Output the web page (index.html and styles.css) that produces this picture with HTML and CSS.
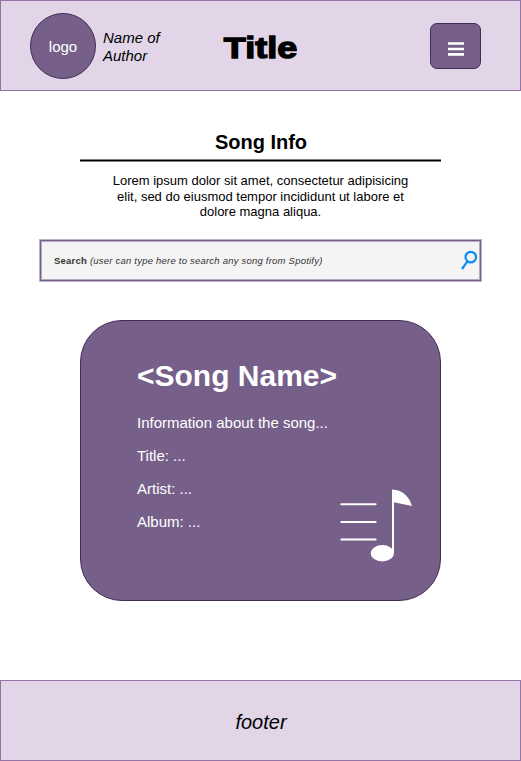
FILE: index.html
```html
<!DOCTYPE html>
<html lang="en">
<head>
<meta charset="utf-8">
<title>Song Info</title>
<link rel="stylesheet" href="styles.css">
</head>
<body>
<header class="header">
  <div class="brand">
    <div class="logo">logo</div>
    <div class="author">Name of<br>Author</div>
  </div>
  <h1 class="title">Title</h1>
  <button class="menu" aria-label="Menu"><svg width="16" height="14" viewBox="0 0 16 14"><path d="M0 1.5H16M0 7H16M0 12.4H16"/></svg></button>
</header>
<main>
  <section class="intro">
    <h2>Song Info</h2>
    <p>Lorem ipsum dolor sit amet, consectetur adipisicing<br>elit, sed do eiusmod tempor incididunt ut labore et<br>dolore magna aliqua.</p>
  </section>
  <div class="search">
    <div class="search-text"><b>Search</b> <i>(user can type here to search any song from Spotify)</i></div>
    <svg class="search-icon" width="18" height="20" viewBox="0 0 18 20"><circle cx="10.8" cy="7.1" r="5.3"/><path d="M7.4 11.4L2 19"/></svg>
  </div>
  <article class="card">
    <div class="details">
      <h3>&lt;Song Name&gt;</h3>
      <p>Information about the song...</p>
      <p>Title: ...</p>
      <p>Artist: ...</p>
      <p>Album: ...</p>
    </div>
    <svg class="note" width="74" height="74" viewBox="0 0 74 74">
      <path class="lines" d="M1.3 16.2H35.6M1.3 34H35.6M1.3 51.5H35.6"/>
      <ellipse cx="42.3" cy="65.2" rx="11.5" ry="8.2"/>
      <path d="M52 1.4C62 1.6 69.5 8.5 72 18L54 14.3V65H52Z"/>
    </svg>
  </article>
</main>
<footer class="footer">footer</footer>
</body>
</html>
```
FILE: styles.css
```css
* { box-sizing: border-box; }
body {
  margin: 0;
  height: 761px;
  display: flex;
  flex-direction: column;
  background: #fff;
  color: #000;
  font-family: "Liberation Sans", Arial, sans-serif;
}
h1, h2, h3, p { margin: 0; }
.header {
  height: 91px;
  padding: 0 39px 0 29px;
  display: grid;
  grid-template-columns: 193px 75px 1fr;
  align-items: center;
  background: #e1d5e7;
  border: 1px solid #9673a6;
}
.brand { display: flex; align-items: center; gap: 7px; }
.logo {
  width: 66px;
  height: 66px;
  padding-top: 2px;
  border: 1px solid #432d57;
  border-radius: 50%;
  background: #76608a;
  color: #fff;
  font-size: 15px;
  display: flex;
  align-items: center;
  justify-content: center;
}
.author { font-size: 15px; line-height: 18px; font-style: italic; padding-top: 3px; white-space: nowrap; }
.title {
  font-size: 30px;
  line-height: 36px;
  text-align: center;
  padding-top: 4px;
  transform: scaleX(1.2);
  -webkit-text-stroke: 1.3px #000;
}
.menu {
  justify-self: end;
  width: 51px;
  height: 46px;
  padding: 6px 0 0;
  border: 1px solid #432d57;
  border-radius: 7px;
  background: #76608a;
  display: flex;
  align-items: center;
  justify-content: center;
}
.menu svg { stroke: #fff; stroke-width: 2.6; }
main { flex: 1; display: flex; flex-direction: column; align-items: center; }
.intro { width: 361px; text-align: center; padding-top: 40px; }
.intro h2 { font-size: 20px; line-height: 22px; height: 28px; padding-left: 1px; }
.intro h2::after {
  content: "";
  display: block;
  height: 3px;
  margin: 6px 0 0 -1px;
  background: linear-gradient(#808080 1px, #000 1px 2px, #808080 2px);
}
.intro p { margin-top: 11px; padding-top: 3px; font-size: 13px; line-height: 15.6px; }
.search {
  width: 443px;
  height: 43px;
  margin-top: 19px;
  padding: 0 1px 0 14px;
  display: flex;
  align-items: center;
  justify-content: space-between;
  border: 1px solid #bbb0c5;
  background: #f4f4f4;
  box-shadow: inset 0 0 0 1px #76608a, inset 0 0 0 2px #b5aabf;
}
.search-text { padding-top: 1px; font-size: 9.5px; letter-spacing: .22px; color: #333; white-space: nowrap; }
.search-icon { margin-right: 2px; fill: none; stroke: #0c8cf2; stroke-width: 2.2; }
.card {
  width: 361px;
  height: 281px;
  margin-top: 38px;
  padding: 37px 26px 38px 56px;
  display: flex;
  justify-content: space-between;
  border: 1px solid #432d57;
  border-radius: 42px;
  background: #76608a;
  color: #fff;
}
.details { white-space: nowrap; width: 202px; }
.details h3 { font-size: 30px; line-height: 36px; margin-bottom: 20px; }
.details p { font-size: 15px; line-height: 18px; margin-bottom: 15px; }
.note { align-self: flex-end; flex: none; fill: #fff; }
.lines { fill: none; stroke: #fff; stroke-width: 2; stroke-linecap: round; }
.footer {
  height: 81px;
  padding: 3px 0 0 1px;
  display: flex;
  align-items: center;
  justify-content: center;
  background: #e1d5e7;
  border: 1px solid #9673a6;
  font-size: 20px;
  font-style: italic;
}
```
